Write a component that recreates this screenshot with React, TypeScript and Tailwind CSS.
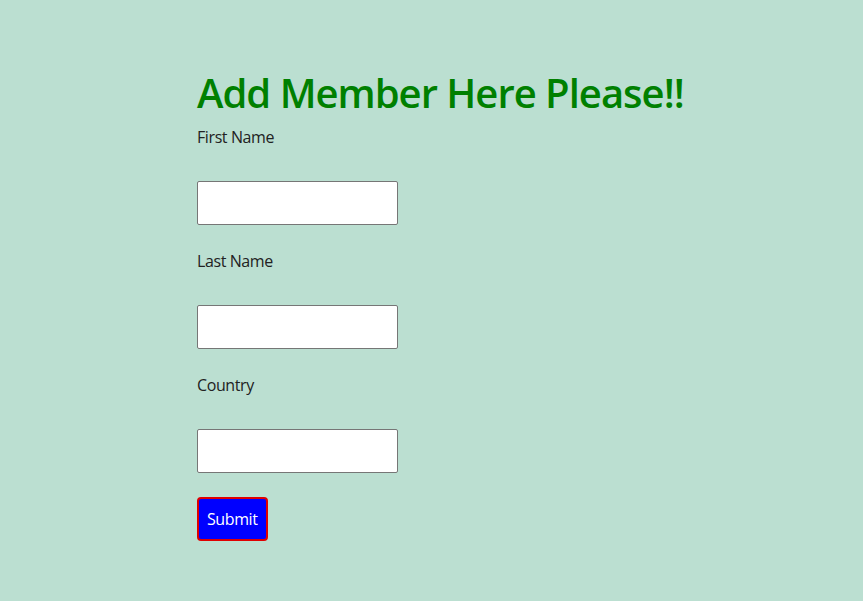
import React from "react";

const Field: React.FC<{ label: string }> = ({ label }) => (
  <div className="flex flex-col">
    <label className="text-[16px] leading-[24px] tracking-[-0.4px] text-[#222]">{label}</label>
    <input
      type="text"
      className="mt-8 mb-6 w-[201px] h-[44px] bg-white border border-[#767676] rounded-[2px]"
    />
  </div>
);

export default function App() {
  return (
    <div
      className="min-h-[601px] w-full bg-[#bbdfd1] pl-[197px] pt-[69px]"
      style={{ fontFamily: '"Open Sans", "Noto Sans", sans-serif' }}
    >
      <h1 className="text-[40px] leading-[48px] tracking-[-1px] font-semibold text-[#008000] mb-2">
        Add Member Here Please!!
      </h1>
      <form className="flex flex-col items-start" onSubmit={(e) => e.preventDefault()}>
        <Field label="First Name" />
        <Field label="Last Name" />
        <Field label="Country" />
        <button
          type="submit"
          className="h-[44px] px-[8px] bg-[#0000ff] text-white text-[16px] tracking-[-0.4px] border-2 border-[#e00000] rounded-[4px]"
        >
          Submit
        </button>
      </form>
    </div>
  );
}
